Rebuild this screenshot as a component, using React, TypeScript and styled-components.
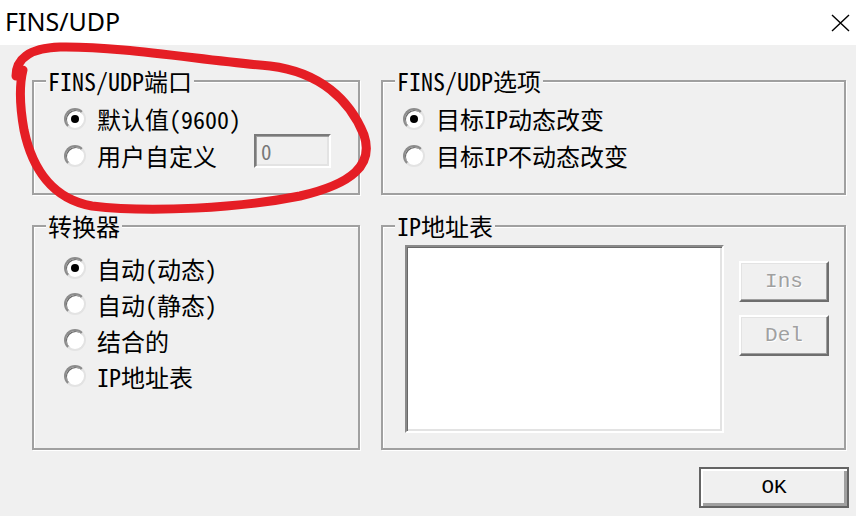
import React from "react";
import styled, { createGlobalStyle } from "styled-components";

const cjk = `"Noto Sans Mono CJK SC", "Noto Sans CJK SC", "Liberation Mono", monospace`;

const GlobalStyle = createGlobalStyle`
  html, body {
    margin: 0;
    padding: 0;
    background: #f0f0f0;
    overflow: hidden;
  }
`;

const Window = styled.div`
  position: relative;
  width: 856px;
  height: 516px;
  background: #f0f0f0;
  font-family: ${cjk};
  color: #000;
  overflow: hidden;
`;

const TitleBar = styled.div`
  height: 45px;
  box-sizing: border-box;
  background: #fff;
  display: flex;
  align-items: center;
  justify-content: space-between;
  padding: 0 6px 0 5px;
`;

const Title = styled.span`
  font-family: "Noto Sans", "Open Sans", sans-serif;
  font-size: 25px;
  line-height: 1;
  padding-bottom: 2px;
`;

const Body = styled.div`
  padding: 35px 7px 0 32px;
`;

const Grid = styled.div`
  display: grid;
  grid-template-columns: 328px 465px;
  grid-template-rows: 115px 225px;
  column-gap: 21px;
  row-gap: 30px;
`;

const Group = styled.div<{ $pad: string }>`
  position: relative;
  box-sizing: border-box;
  border: 2px solid #a0a0a0;
  box-shadow: inset 1px 1px 0 #fff, 1px 1px 0 #fff;
  padding: ${(p) => p.$pad};
`;

const Legend = styled.span`
  position: absolute;
  top: -13px;
  left: 12px;
  padding: 0 2px;
  background: #f0f0f0;
  font-size: 24px;
  line-height: 24px;
  white-space: nowrap;
`;

const Option = styled.div<{ $h: number }>`
  display: flex;
  align-items: center;
  height: ${(p) => p.$h}px;
  font-size: 24px;
  white-space: nowrap;
`;

const Radio = styled.span<{ $on?: boolean }>`
  flex: none;
  width: 22px;
  height: 22px;
  box-sizing: border-box;
  border-radius: 50%;
  background: #fff;
  border: 2px solid;
  border-color: #8c8c8c #e3e3e3 #e3e3e3 #8c8c8c;
  box-shadow: inset 1px 1px 0 #6a6a6a;
  margin-right: 11px;
  display: flex;
  align-items: center;
  justify-content: center;

  &::after {
    content: "";
    display: ${(p) => (p.$on ? "block" : "none")};
    width: 8px;
    height: 8px;
    border-radius: 50%;
    background: #000;
  }
`;

const TextBox = styled.div`
  margin-left: auto;
  margin-bottom: 9px;
  width: 77px;
  height: 34px;
  box-sizing: border-box;
  border: 2px solid;
  border-color: #7a7a7a #fff #fff #7a7a7a;
  box-shadow: inset 1px 1px 0 #a0a0a0, inset -2px -2px 0 #e3e3e3;
  background: #f0f0f0;
  color: #787878;
  font-size: 21px;
  padding-left: 5px;
  display: flex;
  align-items: center;
`;

const ListArea = styled.div`
  display: flex;
`;

const ListBox = styled.div`
  width: 321px;
  height: 188px;
  box-sizing: border-box;
  background: #fff;
  border: 2px solid;
  border-color: #8a8a8a #fff #fff #8a8a8a;
  box-shadow: inset 1px 1px 0 #696969, inset -2px -2px 0 #e3e3e3;
`;

const ButtonColumn = styled.div`
  display: flex;
  flex-direction: column;
  gap: 13px;
  margin-left: 15px;
  padding-top: 16px;
`;

const PushButton = styled.button`
  box-sizing: border-box;
  width: 90px;
  height: 41px;
  padding: 0;
  background: #f0f0f0;
  font-family: "Liberation Mono", monospace;
  font-size: 21px;
  border: 2px solid;
  border-color: #fff #6e6e6e #6e6e6e #fff;
  box-shadow: inset -1px -1px 0 #a0a0a0, inset 1px 1px 0 #e3e3e3;
  color: #a0a0a0;
  text-shadow: 1px 1px 0 #fff;
`;

const Footer = styled.div`
  display: flex;
  justify-content: flex-end;
  margin-top: 17px;
`;

const OkButton = styled(PushButton)`
  width: 150px;
  border-color: #646464;
  box-shadow: inset 2px 2px 0 #fff, inset -3px -3px 0 #a0a0a0;
  color: #000;
  text-shadow: none;
`;

const Annotation = styled.svg`
  position: absolute;
  top: 0;
  left: 0;
  pointer-events: none;
`;

const CloseIcon = () => (
  <svg width="19" height="18" viewBox="0 0 19 18">
    <path d="M1 1 L18 17 M18 1 L1 17" stroke="#000" strokeWidth="1.4" fill="none" />
  </svg>
);

export default function App() {
  return (
    <Window>
      <GlobalStyle />
      <TitleBar>
        <Title>FINS/UDP</Title>
        <CloseIcon />
      </TitleBar>
      <Body>
        <Grid>
          <Group $pad="18px 27px 0 30px">
            <Legend>FINS/UDP端口</Legend>
            <Option $h={37}>
              <Radio $on />
              默认值(9600)
            </Option>
            <Option $h={37}>
              <Radio />
              用户自定义
              <TextBox>0</TextBox>
            </Option>
          </Group>
          <Group $pad="18px 20px 0 20px">
            <Legend>FINS/UDP选项</Legend>
            <Option $h={37}>
              <Radio $on />
              目标IP动态改变
            </Option>
            <Option $h={37}>
              <Radio />
              目标IP不动态改变
            </Option>
          </Group>
          <Group $pad="23px 20px 0 30px">
            <Legend>转换器</Legend>
            <Option $h={36}>
              <Radio $on />
              自动(动态)
            </Option>
            <Option $h={36}>
              <Radio />
              自动(静态)
            </Option>
            <Option $h={36}>
              <Radio />
              结合的
            </Option>
            <Option $h={36}>
              <Radio />
              IP地址表
            </Option>
          </Group>
          <Group $pad="18px 15px 0 22px">
            <Legend>IP地址表</Legend>
            <ListArea>
              <ListBox />
              <ButtonColumn>
                <PushButton disabled>Ins</PushButton>
                <PushButton disabled>Del</PushButton>
              </ButtonColumn>
            </ListArea>
          </Group>
        </Grid>
        <Footer>
          <OkButton>OK</OkButton>
        </Footer>
      </Body>
      <Annotation width="856" height="516" viewBox="0 0 856 516">
        <path
          d="M16 76 C16 60 28 48 60 47 C120 46 200 60 270 66 C320 72 350 100 364 135 C374 165 352 184 300 196 C240 208 150 213 92 206 C52 199 32 168 24 130 C19 102 20 82 23 70"
          stroke="#e51e25"
          strokeWidth="9"
          strokeLinecap="round"
          strokeLinejoin="round"
          fill="none"
        />
      </Annotation>
    </Window>
  );
}
